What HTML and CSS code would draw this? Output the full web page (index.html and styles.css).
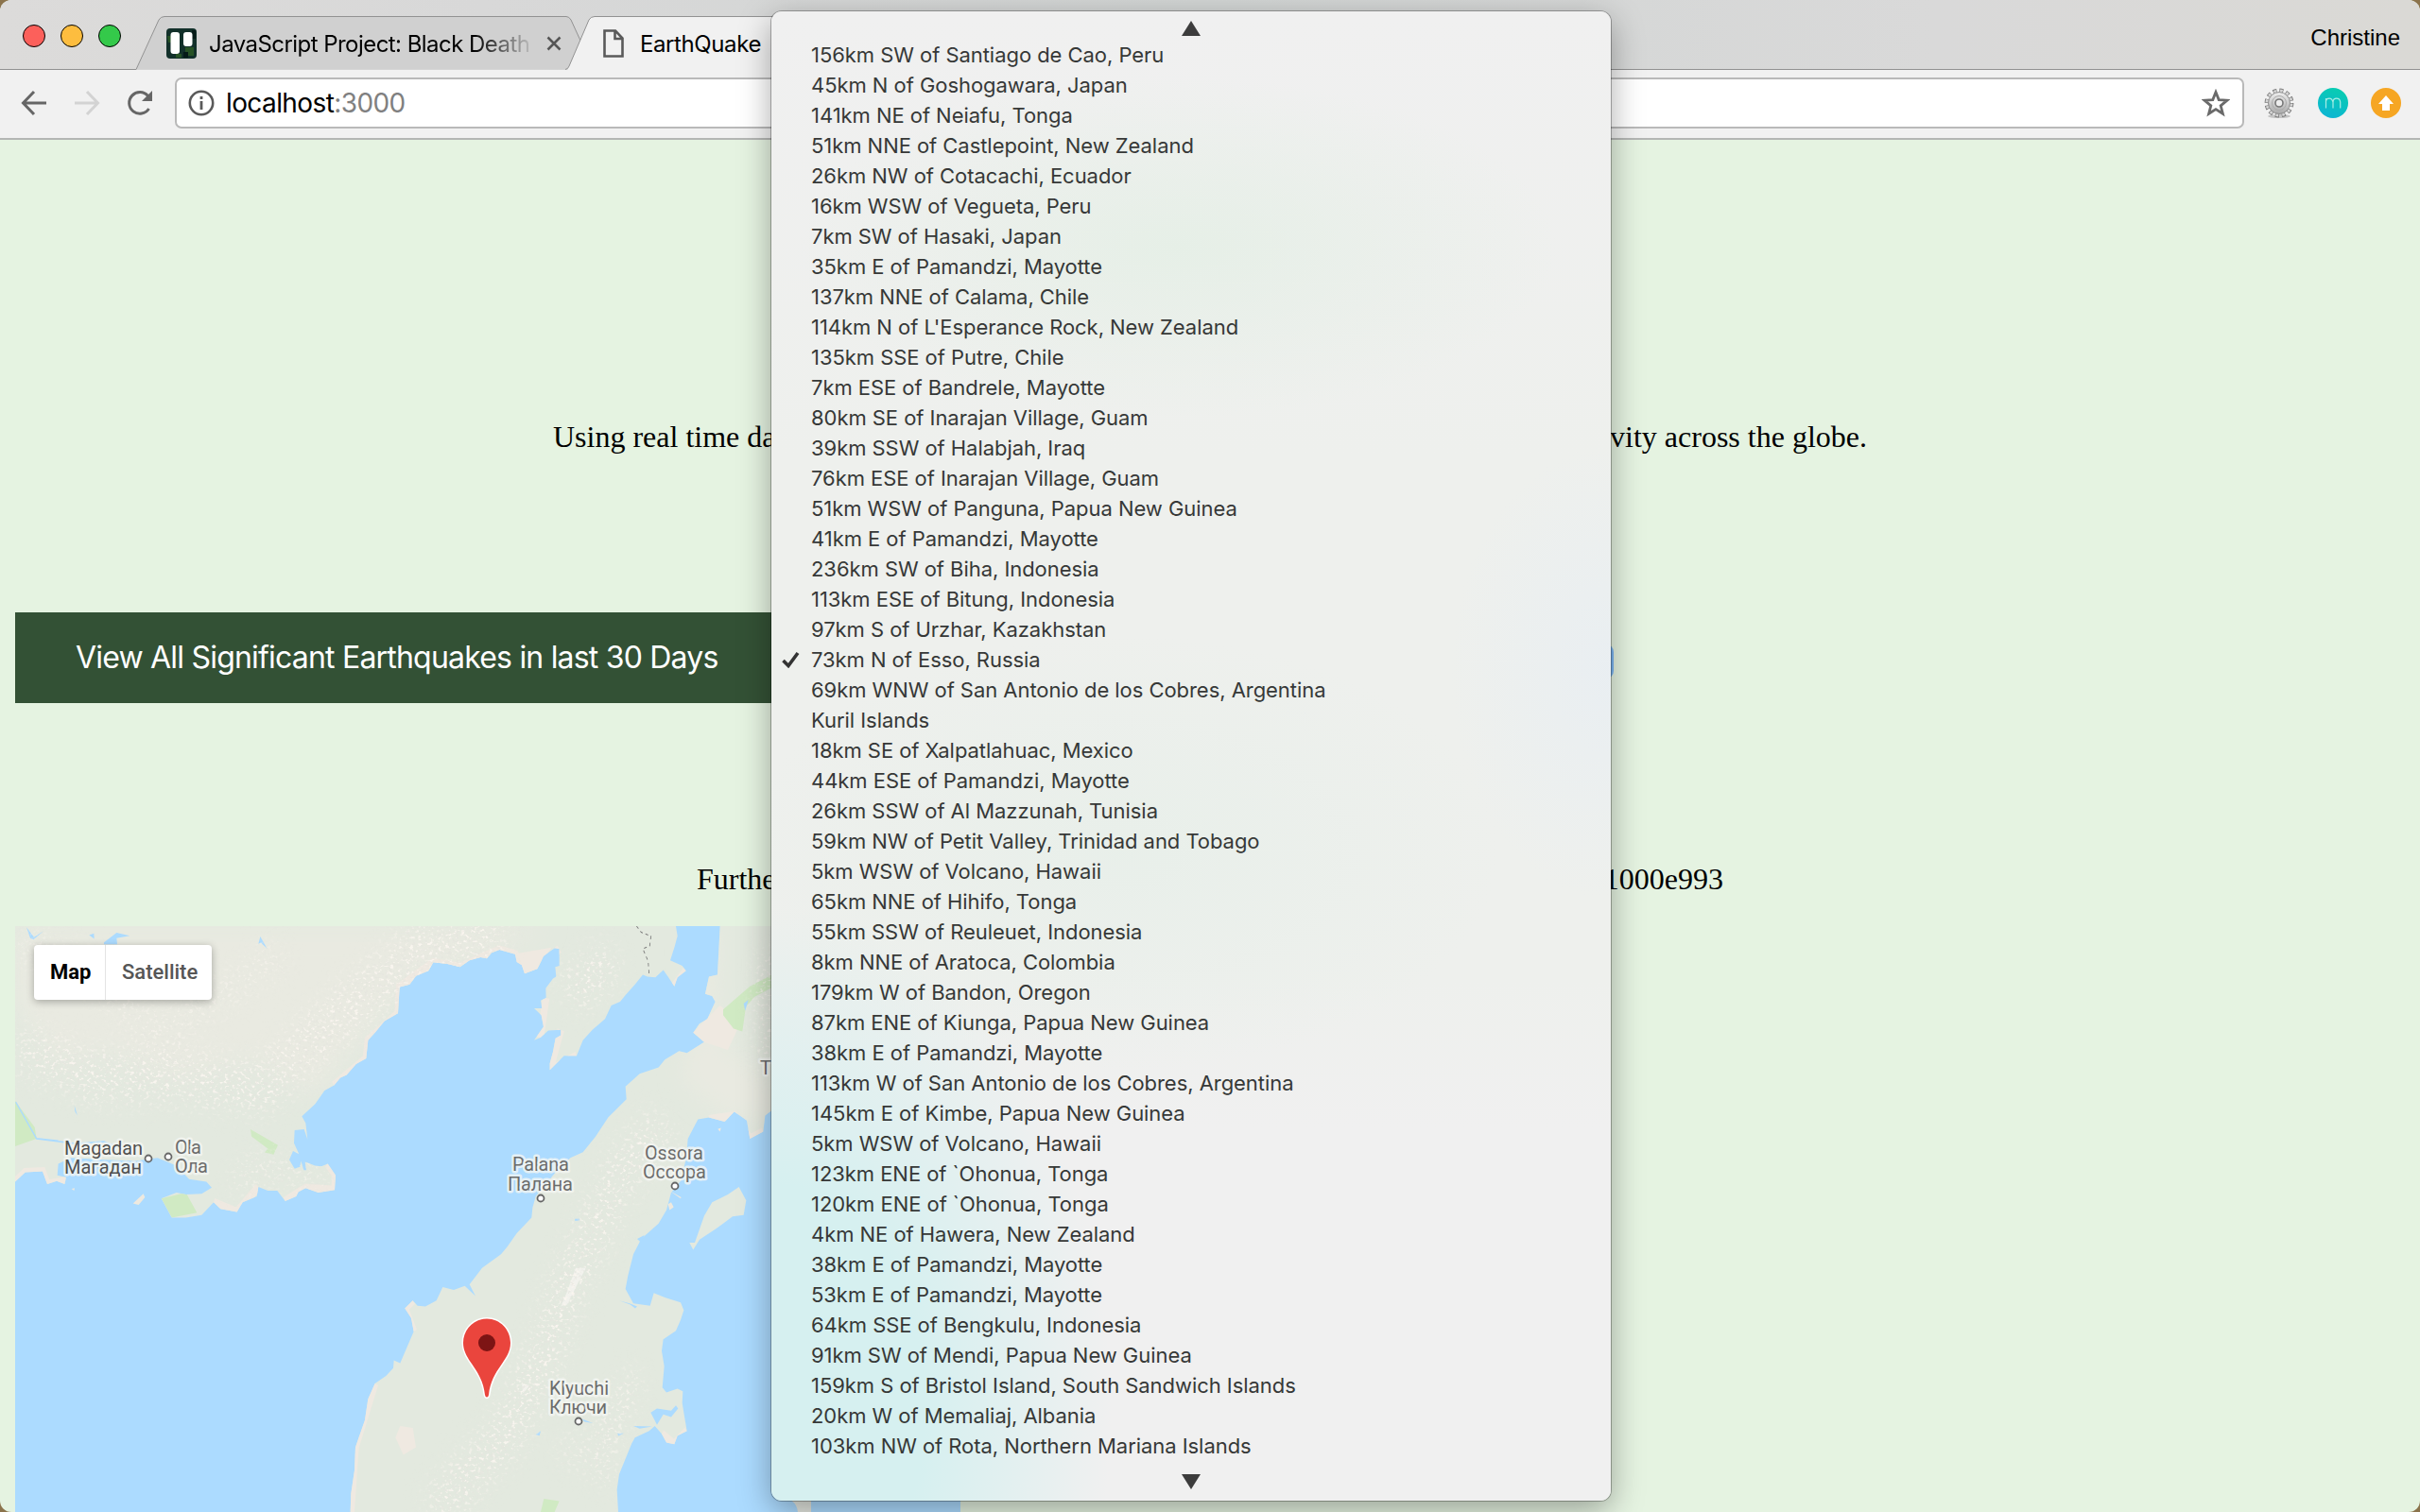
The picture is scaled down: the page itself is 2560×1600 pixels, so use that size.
FILE: index.html
```html
<!DOCTYPE html>
<html lang="en">
<head>
<meta charset="utf-8">
<title>EarthQuake</title>
<link rel="stylesheet" href="styles.css">
</head>
<body>
<div class="window">
  <header class="tabstrip">
    <svg class="tab-shapes" width="2560" height="75" viewBox="0 0 2560 75">
      <path d="M0 73.5H144L168 21Q170 17.500 174 17.500H599Q602 17.500 604 21L628 73.500" fill="#d0d0d0" stroke="#929292"/>
      <path d="M600 75L601 72 623 21Q625 17.500 629 17.500H1000L1024 73.500H2560V75Z" fill="#f1f1f1"/>
      <path d="M598 73.500Q601 73 602 70L623 21Q625 17.500 629 17.500H1000L1024 73.500H2560" fill="none" stroke="#929292"/>
    </svg>
    <div class="lights"><i class="red"></i><i class="yellow"></i><i class="green"></i></div>
    <div class="tab first">
      <svg width="32" height="32" viewBox="0 0 32 32"><rect width="32" height="32" rx="4" fill="#12302a"/><path d="M1 8h4v7H2zM10 27h6v4h-6zM20 20h9v9h-9z" fill="#275326"/><path d="M27 2h4v9h-4zM18 25h5v6h-5z" fill="#061b18"/><rect x="4.500" y="4" width="9.500" height="23" rx="3" fill="#fff"/><rect x="18" y="4" width="9.500" height="15" rx="3" fill="#fff"/></svg>
      <span class="tab-title faded">JavaScript Project: Black Death</span>
      <svg class="close" width="16" height="16" viewBox="0 0 16 16"><path d="M1.500 1.500l13 13M14.500 1.500l-13 13" stroke="#555" stroke-width="2.500"/></svg>
    </div>
    <div class="tab second">
      <svg width="22" height="30" viewBox="0 0 22 30"><path d="M1.500 1.500H13L20.500 9.500V28.500H1.500ZM12.500 2V10H20" fill="none" stroke="#5a5a5a" stroke-width="2.600"/></svg>
      <span class="tab-title">EarthQuake</span>
    </div>
    <span class="profile">Christine</span>
  </header>
  <nav class="toolbar">
    <div class="nav-icons">
      <svg width="28" height="28" viewBox="0 0 28 28"><path d="M27 14H3M14 2L2.500 14 14 26" fill="none" stroke="#666" stroke-width="3"/></svg>
      <svg width="28" height="28" viewBox="0 0 28 28"><path d="M1 14H25M14 2L25.500 14 14 26" fill="none" stroke="#d3d3d3" stroke-width="3"/></svg>
      <svg width="28" height="28" viewBox="0 0 28 28"><path d="M23.500 20A11.300 11.300 0 1 1 22.500 6.500" fill="none" stroke="#666" stroke-width="3"/><path d="M27 1V12H16Z" fill="#666"/></svg>
    </div>
    <div class="omnibox">
      <svg width="28" height="28" viewBox="0 0 28 28"><circle cx="14" cy="14" r="12.200" fill="none" stroke="#5a5a5a" stroke-width="2.600"/><path d="M14 12V21M14 7V10" stroke="#5a5a5a" stroke-width="2.800"/></svg>
      <span class="url">localhost<span class="port">:3000</span></span>
      <svg class="star" width="30" height="30" viewBox="0 0 30 30"><path d="M15 3.500L18.200 11.600 27 12.200 20.200 17.800 22.400 26.300 15 21.600 7.600 26.300 9.800 17.800 3 12.200 11.800 11.600Z" fill="none" stroke="#6a6a6a" stroke-width="2.800"/></svg>
    </div>
    <div class="extensions">
      <svg width="34" height="34" viewBox="-17 -17 34 34">
        <defs><linearGradient id="metal" x2="0" y2="1"><stop stop-color="#eee"/><stop offset="1" stop-color="#aaa"/></linearGradient></defs>
        <ellipse cy="14" rx="12" ry="2" fill="#c4c4c4"/>
        <circle r="13.400" fill="none" stroke="#777" stroke-width="4" stroke-dasharray="4 3.016"/>
        <circle r="12.800" fill="none" stroke="#d6d6d6" stroke-width="3.400" stroke-dasharray="2.600 4.101" stroke-dashoffset="-.7"/>
        <circle r="11.500" fill="url(#metal)" stroke="#8d8d8d"/><circle r="7.500" fill="none" stroke="#aaa"/><circle r="4" fill="#eee" stroke="#777" stroke-width="1.600"/>
      </svg>
      <svg width="32" height="32" viewBox="0 0 32 32"><defs><linearGradient id="teal" x1=".7" y1="0" x2=".3" y2="1"><stop stop-color="#08cdb0"/><stop offset="1" stop-color="#0db5d4"/></linearGradient></defs><circle cx="16" cy="16" r="16" fill="url(#teal)"/><path d="M8.500 21.500V11M8.500 14Q9 11.200 12 11.200T16 15V21.500M16 15Q16.200 11.200 19.700 11.200T23.700 15V21.500" fill="none" stroke="#a9ede6" stroke-width="1.200"/></svg>
      <svg width="32" height="32" viewBox="0 0 32 32"><circle cx="16" cy="16" r="16" fill="#f6a623"/><path d="M16 8L24 17H20V24H12V17H8Z" fill="#fff"/></svg>
    </div>
  </nav>
  <main class="page">
    <p class="intro"><span>Using real time data</span><span>activity across the globe.</span></p>
    <div class="controls"><div class="view-all">View All Significant Earthquakes in last 30 Days</div><div class="select"></div></div>
    <p class="further"><span>Further</span><span>us1000e993</span></p>
    <section class="map">
      <svg class="map-canvas" width="1000" height="620" viewBox="16 980 1000 620">
        <defs>
          <path id="north" d="M48 49H2145L2150 75 2140 105 2127 138 2165 152 2177 165 2150 182 2140 205 2120 180 2105 163 2080 182 2055 180 2040 175 2015 200 1985 228 1968 245 1940 255 1920 290 1880 318 1850 345 1830 385 1790 385 1745 422 1745 405 1755 375 1763 340 1780 332 1780 318 1740 320 1715 338 1695 345 1725 310 1718 280 1695 262 1720 262 1716 242 1733 235 1732 210 1755 185 1765 180 1762 155 1775 152 1775 108 1760 106 1725 127 1705 160 1665 172 1656 150 1640 142 1635 122 1585 110 1560 118 1545 133 1525 130 1490 138 1460 155 1420 147 1375 143 1360 165 1320 178 1300 200 1268 207 1263 275 1220 295 1190 325 1168 345 1162 392 1130 407 1100 435 1080 442 1060 462 1030 475 1000 510 958 542 970 560 976 602 965 576 935 578 933 612 949 640 930 632 918 655 935 678 952 673 955 658 964 682 972 682 968 660 1000 670 1020 672 1040 665 1065 695 1062 733 1010 740 970 728 947 738 940 750 905 762 880 735 850 735 820 725 815 750 770 765 752 790 700 782 678 765 640 798 590 805 545 805 512 755 560 740 590 745 640 743 672 727 655 712 600 705 560 670 500 650 430 658 330 655 225 650 185 665 182 695 210 700 205 718 180 710 150 718 135 685 80 687 48 712Z"/>
          <path id="kamchatka" d="M2285 49L2277 175 2250 180 2238 225 2260 230 2270 245 2245 290 2220 302 2200 325 2235 350 2180 378 2155 373 2130 385 2110 395 2090 415 2030 432 1985 465 1988 498 1930 545 1890 595 1850 635 1810 650 1760 690 1700 750 1690 780 1687 805 1640 845 1610 880 1590 900 1530 935 1490 978 1509 1008 1475 982 1440 992 1405 985 1385 1020 1350 1035 1325 1033 1310 1020 1285 1040 1305 1065 1313 1100 1270 1182 1250 1175 1248 1195 1225 1215 1190 1235 1168 1275 1158 1330 1128 1400 1125 1460 1114 1520 1112 1568H1962L1958 1510 1965 1470 1985 1430 2005 1390 2015 1375 2060 1358 2078 1345 2100 1365 2115 1388 2140 1392 2150 1370 2180 1358 2172 1320 2165 1285 2167 1255 2150 1248 2115 1258 2102 1245 2108 1190 2100 1150 2105 1120 2145 1098 2160 1070 2170 1045 2160 1025 2110 1012 2075 1000 2063 1033 2010 1027 1985 990 1993 955 2010 900 2035 860 2090 820 2115 785 2130 740 2160 710 2178 650 2183 600 2215 550 2250 545 2300 556 2330 530 2370 553 2380 600 2422 582 2428 540 2460 520 2600 300V49Z"/>
          <path id="isle" d="M2205 870L2235 800 2260 765 2310 745 2345 725 2368 760 2360 798 2325 802 2270 835 2220 862 2200 888 2188 870Z"/>
          <clipPath id="land"><use href="#north"/><use href="#kamchatka"/><use href="#isle"/></clipPath>
          <filter id="soft" x="-.4" y="-.4" width="1.800" height="1.800"><feGaussianBlur stdDeviation="32"/></filter>
          <filter id="dark" x="0" y="0" width="1" height="1"><feTurbulence type="fractalNoise" baseFrequency=".09 .13" numOctaves="2" seed="8"/><feColorMatrix values="0 0 0 0 .79 0 0 0 0 .79 0 0 0 0 .74 7 0 0 0 -3.900"/></filter>
          <filter id="light" x="0" y="0" width="1" height="1"><feTurbulence type="fractalNoise" baseFrequency=".08 .12" numOctaves="2" seed="21"/><feColorMatrix values="0 0 0 0 .95 0 0 0 0 .91 0 0 0 0 .86 6 0 0 0 -3.300"/></filter>
          <mask id="ranges" maskUnits="userSpaceOnUse" x="0" y="960" width="1020" height="640">
            <g transform="translate(0 960) scale(.33333 .40816)" fill="none" stroke="#fff" filter="url(#soft)">
              <path d="M60 360L300 440 560 440 830 470 960 370 1150 230 1350 100 1600 70" stroke-width="130"/>
              <path d="M60 100L280 160 500 340 900 120" stroke-width="90" opacity=".6"/>
              <path d="M1800 230L1950 130M2110 560L1970 690 1910 800 1850 900 1790 1000 1750 1120 1670 1260 1600 1380 1500 1460 1380 1568" stroke-width="120"/>
              <path d="M1780 1420L1850 1400M1900 1490L1930 1350 2020 1210M2440 120V420" stroke-width="70"/>
              <path d="M740 730L800 670 1040 700" stroke-width="50"/>
            </g>
          </mask>
        </defs>
        <rect x="16" y="980" width="1000" height="620" fill="#acdbff"/>
        <g transform="translate(0 960) scale(.33333 .40816)">
          <g fill="#e3e9df"><use href="#north"/><use href="#kamchatka"/><use href="#isle"/></g>
          <g clip-path="url(#land)">
            <path d="M48 49H1750L1560 120 1300 190 1150 340 1000 480 800 400 560 440 350 380 180 390 48 260ZM2180 49H2280L2270 340 2500 480V560L2300 540 2150 440 2200 360Z" fill="#e9eae1" filter="url(#soft)"/>
            <g fill="none" stroke="#efe9e1" stroke-width="22"><path d="M1775 108L1705 160 1665 172 1635 122 1585 110 1460 155 1375 143 1268 207 1263 275 1168 345 1162 392 1060 462M1733 235L1715 338M1830 385L1745 422 1780 318M1040 665L1065 695 1062 733 970 728 905 762M820 725L752 790 678 765M48 712L80 687 135 685 150 718 210 710M2177 165L2140 205M1310 1020L1285 1040 1313 1100M1190 1235L1128 1400 1114 1568M2180 1358L2140 1392 2100 1365M2422 582L2380 600 2330 540 2250 550"/></g>
            <path d="M1665 172L1640 120 1750 105 1705 160ZM2200 325L2285 255 2350 300 2310 370 2235 350ZM1270 1345L1310 1350 1320 1400 1280 1420 1255 1375Z" fill="#efe9e1"/>
            <path d="M48 502L110 570 116 600 48 620ZM795 576L882 617 868 641 840 636 850 626 798 594ZM512 755L590 740 625 792 545 805ZM2295 265L2380 205 2450 175V208L2395 232 2367 258 2356 322 2328 315 2295 280ZM1726 1534L1775 1540 1760 1568H1716Z" fill="#d0eac3"/>
            <path d="M1827 935L1860 935 1840 965 1800 1030 1780 1035 1798 1000ZM1656 1235L1682 1240 1660 1260Z" fill="#f2f2ed"/>
          </g>
          <g fill="#acdbff"><path d="M84 52L108 78 138 62 106 84 96 80ZM283 72L298 68 299 82ZM330 91L370 66 412 74 370 80 372 96H330ZM820 95L826 76 848 108 828 92ZM236 514L246 540 238 530ZM1825 808L1840 808 1838 813 1824 813ZM1965 1020L1998 1027 2022 1035 2016 1040 2000 1030ZM2022 860L2045 850 2035 870ZM1700 1368L1716 1358 1712 1370ZM2065 1310L2085 1300 2130 1305 2145 1292 2152 1300 2130 1322 2105 1315 2085 1342ZM2010 1345L2070 1346 2030 1352ZM1960 1364L1980 1364 1962 1371ZM2360 250L2375 240 2365 268ZM1845 1326L1882 1338 1855 1334Z"/><path d="M50 505L116 600 185 606M116 600L240 613 330 608 430 640" fill="none" stroke="#acdbff" stroke-width="4"/></g>
          <path d="M422 768L455 743 460 752 440 772ZM227 730L237 728 235 735ZM2278 575L2288 572 2285 582ZM2120 770L2130 765 2138 778 2125 785ZM2125 735L2162 752 2160 755Z" fill="#eee9df"/>
          <path d="M2500 1520L2514 1540Q2530 1550 2532 1568H2574V1520Z" fill="#e6e9e2"/>
          <path d="M2020 49L2035 65 2066 75 2062 100 2040 108 2057 140 2060 175" fill="none" stroke="#7a7a7a" stroke-width="2.500" stroke-dasharray="9 9"/>
        </g>
        <g mask="url(#ranges)"><g transform="translate(0 960) scale(.33333 .40816)"><g clip-path="url(#land)"><rect x="48" y="49" width="2400" height="1519" filter="url(#light)"/><rect x="48" y="49" width="2400" height="1519" filter="url(#dark)" opacity=".75"/></g></g></g>
        <g class="labels">
          <text x="68" y="1222" textLength="83" class="city">Magadan</text><text x="68" y="1242" textLength="82" class="city">Магадан</text>
          <text x="185" y="1221" textLength="28">Ola</text><text x="185" y="1241" textLength="35">Ола</text>
          <text x="542" y="1239" textLength="60">Palana</text><text x="537" y="1260" textLength="69">Палана</text>
          <text x="682" y="1226.500" textLength="62">Ossora</text><text x="680" y="1246.500" textLength="67">Оссора</text>
          <text x="581" y="1476" textLength="63">Klyuchi</text><text x="581" y="1495.500" textLength="61">Ключи</text>
          <text x="804" y="1137">T</text>
        </g>
        <g fill="#fff" stroke="#666" stroke-width="1.800"><circle cx="157" cy="1226" r="3.500"/><circle cx="178" cy="1224" r="3.500"/><circle cx="572" cy="1268" r="3.500"/><circle cx="714" cy="1255" r="3.500"/><circle cx="612" cy="1504" r="3.500"/></g>
        <path d="M515 1395.500C501 1395.500 490 1407 490 1421C490 1440 510 1448 513 1476Q513.500 1478.500 515 1478.500T517 1476C520 1448 540 1440 540 1421C540 1407 529 1395.500 515 1395.500Z" fill="#ea453d" stroke="#fff" stroke-width="3" paint-order="stroke"/><circle cx="515" cy="1421" r="9" fill="#7d1414"/>
      </svg>
      <div class="map-type"><span class="on">Map</span><span>Satellite</span></div>
    </section>
  </main>
</div>
<div class="menu">
  <svg class="arrow" width="20" height="16" viewBox="0 0 20 16"><path d="M10 0L20 16H0Z" fill="#3c3c3c"/></svg>
  <ul>
    <li>156km SW of Santiago de Cao, Peru</li><li>45km N of Goshogawara, Japan</li><li>141km NE of Neiafu, Tonga</li><li>51km NNE of Castlepoint, New Zealand</li><li>26km NW of Cotacachi, Ecuador</li><li>16km WSW of Vegueta, Peru</li><li>7km SW of Hasaki, Japan</li><li>35km E of Pamandzi, Mayotte</li><li>137km NNE of Calama, Chile</li><li>114km N of L'Esperance Rock, New Zealand</li><li>135km SSE of Putre, Chile</li><li>7km ESE of Bandrele, Mayotte</li><li>80km SE of Inarajan Village, Guam</li><li>39km SSW of Halabjah, Iraq</li><li>76km ESE of Inarajan Village, Guam</li><li>51km WSW of Panguna, Papua New Guinea</li><li>41km E of Pamandzi, Mayotte</li><li>236km SW of Biha, Indonesia</li><li>113km ESE of Bitung, Indonesia</li><li>97km S of Urzhar, Kazakhstan</li>
    <li class="checked"><svg width="19" height="18" viewBox="0 0 19 18"><path d="M1.500 10L7 15.500 17 2" fill="none" stroke="#333" stroke-width="3.600"/></svg>73km N of Esso, Russia</li>
    <li>69km WNW of San Antonio de los Cobres, Argentina</li><li>Kuril Islands</li><li>18km SE of Xalpatlahuac, Mexico</li><li>44km ESE of Pamandzi, Mayotte</li><li>26km SSW of Al Mazzunah, Tunisia</li><li>59km NW of Petit Valley, Trinidad and Tobago</li><li>5km WSW of Volcano, Hawaii</li><li>65km NNE of Hihifo, Tonga</li><li>55km SSW of Reuleuet, Indonesia</li><li>8km NNE of Aratoca, Colombia</li><li>179km W of Bandon, Oregon</li><li>87km ENE of Kiunga, Papua New Guinea</li><li>38km E of Pamandzi, Mayotte</li><li>113km W of San Antonio de los Cobres, Argentina</li><li>145km E of Kimbe, Papua New Guinea</li><li>5km WSW of Volcano, Hawaii</li><li>123km ENE of `Ohonua, Tonga</li><li>120km ENE of `Ohonua, Tonga</li><li>4km NE of Hawera, New Zealand</li><li>38km E of Pamandzi, Mayotte</li><li>53km E of Pamandzi, Mayotte</li><li>64km SSE of Bengkulu, Indonesia</li><li>91km SW of Mendi, Papua New Guinea</li><li>159km S of Bristol Island, South Sandwich Islands</li><li>20km W of Memaliaj, Albania</li><li>103km NW of Rota, Northern Mariana Islands</li>
  </ul>
  <svg class="arrow" width="20" height="16" viewBox="0 0 20 16"><path d="M10 16L0 0H20Z" fill="#3c3c3c"/></svg>
</div>
</body>
</html>
```
FILE: styles.css
```css
* { box-sizing: border-box; }
body { margin: 0; width: 2560px; height: 1600px; overflow: hidden; background: #8b734c; font-family: Inter, "Liberation Sans", sans-serif; }
svg { display: block; flex: none; }
.window { display: flex; flex-direction: column; height: 1600px; border-radius: 12px; overflow: hidden; background: #e5f3e1; }
.tabstrip { position: relative; flex: none; display: flex; height: 74px; background: linear-gradient(90deg, #dcdbda, #d8d8d8 20%, #d2d5d4 50%, #d9d9d9 80%, #dad9d5); color: #000; font-size: 24px; }
.tab-shapes { position: absolute; left: 0; top: 0; }
.lights { display: flex; gap: 16px; padding: 26px 0 0 24px; width: 176px; }
.lights i { width: 24px; height: 24px; border-radius: 50%; border: 1px solid; }
.red { background: #fc605b; border-color: #e2463f; }
.yellow { background: #fdbd3f; border-color: #dfa02c; }
.green { background: #34c94a; border-color: #26aa35; }
.tab { position: relative; display: flex; align-items: center; height: 58px; margin-top: 17px; }
.first { width: 462px; }
.first .tab-title { width: 350px; margin-left: 13px; }
.tab-title { white-space: nowrap; overflow: hidden; letter-spacing: -.55px; }
.faded { -webkit-mask-image: linear-gradient(90deg, #000 80%, transparent 99%); mask-image: linear-gradient(90deg, #000 80%, transparent 99%); }
.close { margin-left: 7px; }
.second .tab-title { margin-left: 17px; letter-spacing: -.4px; }
.profile { position: relative; margin: 25px 21px 0 auto; line-height: 29px; font-family: "Liberation Sans", Arial, sans-serif; }
.toolbar { flex: none; display: flex; align-items: center; height: 74px; padding: 0 20px 2px 22px; background: #f1f1f1; border-bottom: 2px solid #b4b6b4; }
.nav-icons { display: flex; gap: 28px; width: 163px; }
.omnibox { flex: 1; display: flex; align-items: center; height: 54px; padding: 0 13px 0 12px; background: #fff; border: 2px solid #b9b9b9; border-radius: 7px; }
.url { margin-left: 12px; font-size: 28px; letter-spacing: -.6px; color: #000; }
.port { color: #808080; }
.star { margin-left: auto; }
.extensions { display: flex; align-items: center; gap: 24px; margin-left: 20px; }
.page { flex: 1; display: flex; flex-direction: column; font-family: "Liberation Serif", "Times New Roman", serif; font-size: 32px; line-height: 36px; color: #000; }
.page p { display: flex; justify-content: space-between; align-self: center; }
.intro { width: 1390px; margin: 296px 0 0; }
.controls { display: flex; align-items: center; margin: 168px 0 0 16px; }
.view-all { width: 846px; height: 96px; padding: 0 64px; background: #335135; color: #fff; font: 32px/96px Inter, sans-serif; letter-spacing: -.8px; white-space: nowrap; }
.select { width: 845px; height: 36px; border-radius: 8px; background: #7cb6f3; margin-top: 7px; }
.further { width: 1086px; margin: 168px 0 0; }
.map { position: relative; width: 1000px; height: 620px; margin: 32px 0 0 16px; }
.map-canvas { position: absolute; inset: 0; }
.labels { font: 20px Roboto, sans-serif; fill: #6c6c6c; stroke: #f4f6f3; stroke-opacity: .8; stroke-width: 5px; stroke-linejoin: round; paint-order: stroke; }
.city { fill: #505050; }
.map-type { position: absolute; left: 20px; top: 20px; display: flex; width: 188px; height: 58px; background: #fff; border-radius: 4px; box-shadow: 0 2px 8px rgba(0,0,0,.3); font: 500 22px/58px Roboto, sans-serif; color: #565656; }
.map-type span { flex: 1; padding-left: 17px; border-left: 1px solid #e4e4e4; }
.map-type .on { flex: none; width: 75px; border: 0; color: #000; font-weight: 700; }
.menu { position: absolute; left: 816px; top: 12px; width: 888px; height: 1576px; padding-top: 10px; border-radius: 11px; background:
  radial-gradient(ellipse 400px 180px at 430px 250px, rgba(229,239,230,.9), rgba(229,239,230,0)),
  radial-gradient(ellipse 400px 230px at 370px 890px, rgba(231,239,233,.8), rgba(231,239,233,0)),
  radial-gradient(ellipse 170px 240px at 888px 700px, rgba(232,238,243,.8), rgba(232,238,243,0)),
  radial-gradient(ellipse 360px 530px at 0 1480px, #d6f0f0 45%, rgba(214,240,240,0)),
  linear-gradient(#f0f0f0, #eef0ed 30%, #eef0ed 65%, #f0f0f0 75%);
  box-shadow: 0 0 0 1px rgba(0,0,0,.28), 0 10px 34px rgba(0,0,0,.34); }
.arrow { margin: 0 auto; }
.menu ul { margin: 4px 0 14px; padding: 0 0 0 42px; list-style: none; font-size: 22px; line-height: 32px; letter-spacing: -.05px; color: #363837; }
.menu li { position: relative; height: 32px; white-space: nowrap; }
.checked svg { position: absolute; left: -31px; top: 7px; }
```
